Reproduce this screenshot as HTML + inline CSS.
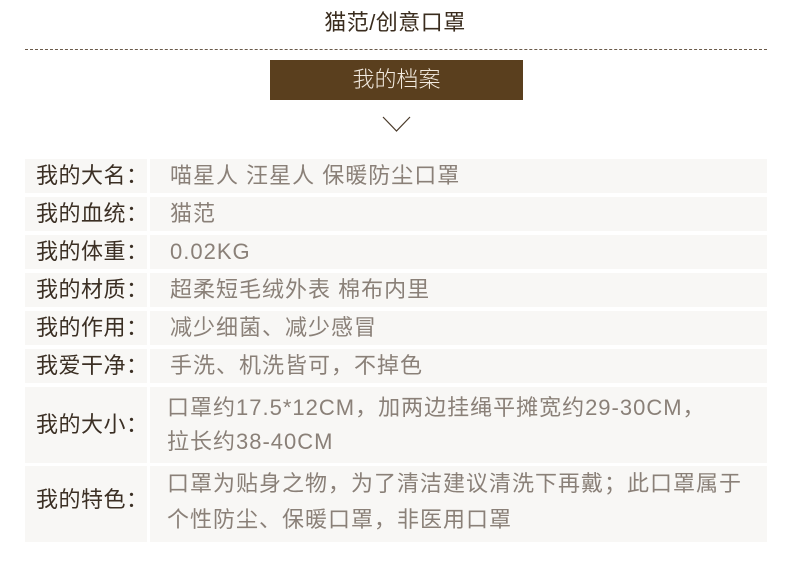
<!DOCTYPE html>
<html><head><meta charset="utf-8"><style>
body{margin:0;width:790px;height:564px;background:#fff;position:relative;overflow:hidden;font-family:"Liberation Sans","Noto Sans CJK SC",sans-serif;}
.t{position:absolute;left:0;width:790px;top:8px;text-align:center;font-size:22px;color:#3a2c1e;line-height:30px;letter-spacing:0.5px}
.dash{position:absolute;left:25px;width:742px;top:49px;border-top:1px dashed #6a5a4a}
.box{position:absolute;left:270px;top:60px;width:253px;height:40px;background:#5a3f1e;color:#f3ebe0;font-size:22px;line-height:40px;text-align:center;font-weight:300}
.c{position:absolute;background:#f8f7f5;white-space:nowrap}
.l{left:25px;width:122px;color:#3b2f24;font-size:22px;padding-left:11px;box-sizing:border-box;letter-spacing:0.5px}
.v{left:150px;width:617px;color:#8a8078;font-size:22px;padding-left:20px;box-sizing:border-box;letter-spacing:1px}
</style></head><body>
<div class="t">猫范/创意口罩</div>
<div class="dash"></div>
<div class="box">我的档案</div>
<svg style="position:absolute;left:382px;top:115px" width="30" height="20"><path d="M1 2 L14.5 16 L28 2" fill="none" stroke="#4a3a2a" stroke-width="1.2"/></svg>

<div class="c l" style="top:159px;height:34px;line-height:34px">我的大名：</div>
<div class="c v" style="top:159px;height:34px;line-height:34px">喵星人 汪星人 保暖防尘口罩</div>
<div class="c l" style="top:197px;height:34px;line-height:34px">我的血统：</div>
<div class="c v" style="top:197px;height:34px;line-height:34px">猫范</div>
<div class="c l" style="top:235px;height:34px;line-height:34px">我的体重：</div>
<div class="c v" style="top:235px;height:34px;line-height:34px">0.02KG</div>
<div class="c l" style="top:273px;height:34px;line-height:34px">我的材质：</div>
<div class="c v" style="top:273px;height:34px;line-height:34px">超柔短毛绒外表 棉布内里</div>
<div class="c l" style="top:311px;height:34px;line-height:34px">我的作用：</div>
<div class="c v" style="top:311px;height:34px;line-height:34px">减少细菌、减少感冒</div>
<div class="c l" style="top:349px;height:34px;line-height:34px">我爱干净：</div>
<div class="c v" style="top:349px;height:34px;line-height:34px">手洗、机洗皆可，不掉色</div>
<div class="c l" style="top:387px;height:76px;line-height:76px">我的大小：</div>
<div class="c v" style="top:387px;height:76px;line-height:34px;padding-left:17px;padding-top:4px">口罩约17.5*12CM，加两边挂绳平摊宽约29-30CM，<br>拉长约38-40CM</div>
<div class="c l" style="top:466px;height:76px;line-height:68px">我的特色：</div>
<div class="c v" style="top:466px;height:76px;line-height:36px;padding-left:17px;padding-top:0px">口罩为贴身之物，为了清洁建议清洗下再戴；此口罩属于<br>个性防尘、保暖口罩，非医用口罩</div>
</body></html>
